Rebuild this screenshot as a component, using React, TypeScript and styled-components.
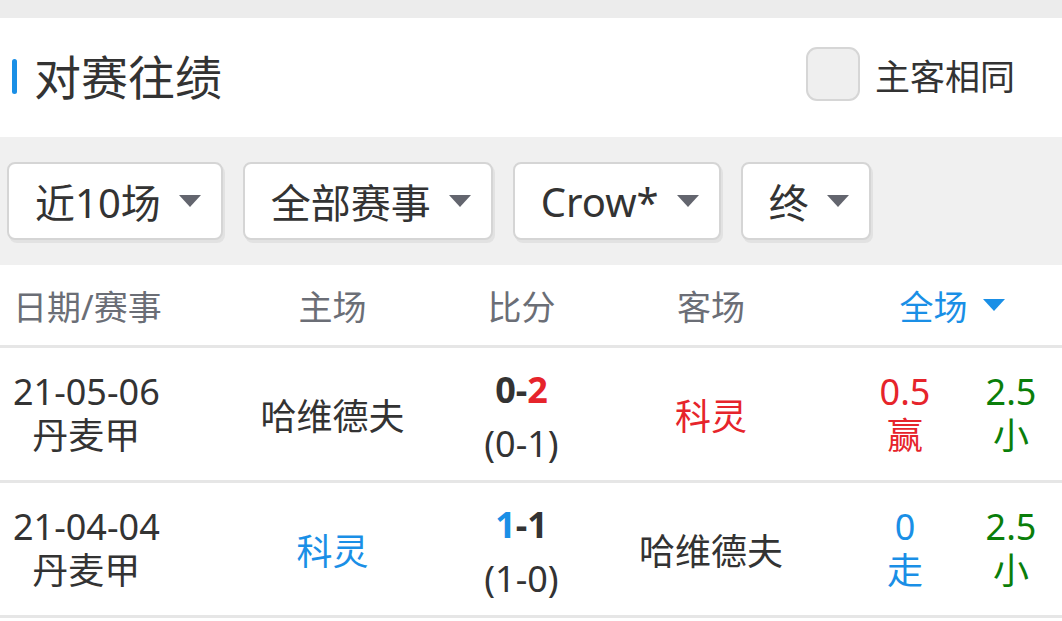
import React from "react";
import styled, { createGlobalStyle } from "styled-components";

const GlobalStyle = createGlobalStyle`
  body {
    margin: 0;
    background: #fff;
    font-family: "Noto Sans", "Noto Sans CJK SC", sans-serif;
    color: #333;
  }
`;

const BLUE = "#1a8fe6";
const RED = "#e6242b";
const GREEN = "#0a7e0a";

const Page = styled.div`
  width: 1062px;
  background: #fff;
`;

const TopStrip = styled.div`
  height: 18px;
  background: #ececec;
`;

const TitleBar = styled.header`
  height: 119px;
  box-sizing: border-box;
  display: flex;
  align-items: center;
  justify-content: space-between;
  padding: 0 47px 7px 12px;
  background: #fff;
`;

const TitleWrap = styled.div`
  display: flex;
  align-items: center;
  gap: 17px;
`;

const Mark = styled.span`
  width: 5px;
  height: 35px;
  margin-top: 4px;
  border-radius: 3px;
  background: ${BLUE};
`;

const Title = styled.h1`
  margin: 0;
  font-size: 47px;
  font-weight: 400;
  color: #333;
`;

const SameToggle = styled.label`
  display: flex;
  align-items: center;
  gap: 15px;
  font-size: 35px;
  color: #333;
`;

const Checkbox = styled.span`
  width: 50px;
  height: 50px;
  border: 2px solid #d6d6d6;
  border-radius: 11px;
  background: #efefef;
`;

const FilterBar = styled.div`
  height: 128px;
  box-sizing: border-box;
  padding: 25px 7px;
  display: flex;
  gap: 20px;
  background: #f0f0f0;
`;

const DropButton = styled.button`
  height: 78px;
  box-sizing: border-box;
  display: flex;
  align-items: center;
  gap: 18px;
  padding: 0 20px 0 26px;
  border: 2px solid #d5d5d5;
  border-radius: 8px;
  background: #fff;
  box-shadow: 2px 3px 0 #e2e2e2;
  font-family: inherit;
  font-size: 40px;
  color: #333;
`;

const Caret = styled.span<{ $color?: string }>`
  width: 0;
  height: 0;
  border-left: 11px solid transparent;
  border-right: 11px solid transparent;
  border-top: 12px solid ${(p) => p.$color || "#63656e"};
`;

const Grid = styled.div<{ $height: number }>`
  display: grid;
  grid-template-columns: 238px 189px 189px 190px 1fr;
  height: ${(p) => p.$height}px;
  border-bottom: 3px solid #e6e6e6;
  align-items: center;
`;

const HeadCell = styled.div<{ $left?: boolean }>`
  text-align: ${(p) => (p.$left ? "left" : "center")};
  padding-left: ${(p) => (p.$left ? "13px" : "0")};
  font-size: 34px;
  color: #6b6e76;
`;

const HeadToggle = styled.div`
  display: flex;
  align-items: center;
  justify-content: center;
  gap: 15px;
  padding-left: 36px;
  font-size: 34px;
  color: ${BLUE};
`;

const DateCell = styled.div`
  padding-left: 13px;
`;

const Stack = styled.div<{ $lh?: number; $top?: number }>`
  display: inline-flex;
  flex-direction: column;
  align-items: center;
  padding-top: ${(p) => p.$top || 0}px;
  font-size: 36px;
  line-height: ${(p) => p.$lh || 44}px;
`;

const Cell = styled.div<{ $color?: string }>`
  text-align: center;
  font-size: 36px;
  color: ${(p) => p.$color || "#333"};
`;

const Score = styled.span`
  font-weight: 700;
`;

const Goal = styled.span<{ $color?: string }>`
  color: ${(p) => p.$color || "#333"};
`;

const Odds = styled.div`
  display: grid;
  grid-template-columns: 110px 1fr;
  padding-left: 44px;
`;

const OddsCol = styled.div<{ $color: string }>`
  display: flex;
  flex-direction: column;
  align-items: center;
  font-size: 36px;
  line-height: 44px;
  color: ${(p) => p.$color};
`;

type Match = {
  date: string;
  league: string;
  home: string;
  homeColor?: string;
  away: string;
  awayColor?: string;
  hg: string;
  ag: string;
  hgColor?: string;
  agColor?: string;
  half: string;
  hcap: string;
  hres: string;
  hColor: string;
  ou: string;
  ouRes: string;
  ouColor: string;
};

const matches: Match[] = [
  {
    date: "21-05-06",
    league: "丹麦甲",
    home: "哈维德夫",
    away: "科灵",
    awayColor: RED,
    hg: "0",
    ag: "2",
    agColor: RED,
    half: "(0-1)",
    hcap: "0.5",
    hres: "赢",
    hColor: RED,
    ou: "2.5",
    ouRes: "小",
    ouColor: GREEN,
  },
  {
    date: "21-04-04",
    league: "丹麦甲",
    home: "科灵",
    homeColor: BLUE,
    away: "哈维德夫",
    hg: "1",
    ag: "1",
    hgColor: BLUE,
    half: "(1-0)",
    hcap: "0",
    hres: "走",
    hColor: BLUE,
    ou: "2.5",
    ouRes: "小",
    ouColor: GREEN,
  },
];

const filters = ["近10场", "全部赛事", "Crow*", "终"];

export default function App() {
  return (
    <Page>
      <GlobalStyle />
      <TopStrip />
      <TitleBar>
        <TitleWrap>
          <Mark />
          <Title>对赛往绩</Title>
        </TitleWrap>
        <SameToggle>
          <Checkbox />
          主客相同
        </SameToggle>
      </TitleBar>

      <FilterBar>
        {filters.map((f) => (
          <DropButton key={f}>
            {f}
            <Caret />
          </DropButton>
        ))}
      </FilterBar>

      <Grid $height={80}>
        <HeadCell $left>日期/赛事</HeadCell>
        <HeadCell>主场</HeadCell>
        <HeadCell>比分</HeadCell>
        <HeadCell>客场</HeadCell>
        <HeadToggle>
          全场
          <Caret $color={BLUE} />
        </HeadToggle>
      </Grid>

      {matches.map((m) => (
        <Grid $height={132} key={m.date}>
          <DateCell>
            <Stack>
              <span>{m.date}</span>
              <span>{m.league}</span>
            </Stack>
          </DateCell>
          <Cell $color={m.homeColor}>{m.home}</Cell>
          <Cell>
            <Stack $lh={54} $top={6}>
              <Score>
                <Goal $color={m.hgColor}>{m.hg}</Goal>-
                <Goal $color={m.agColor}>{m.ag}</Goal>
              </Score>
              <span>{m.half}</span>
            </Stack>
          </Cell>
          <Cell $color={m.awayColor}>{m.away}</Cell>
          <Odds>
            <OddsCol $color={m.hColor}>
              <span>{m.hcap}</span>
              <span>{m.hres}</span>
            </OddsCol>
            <OddsCol $color={m.ouColor}>
              <span>{m.ou}</span>
              <span>{m.ouRes}</span>
            </OddsCol>
          </Odds>
        </Grid>
      ))}
    </Page>
  );
}
